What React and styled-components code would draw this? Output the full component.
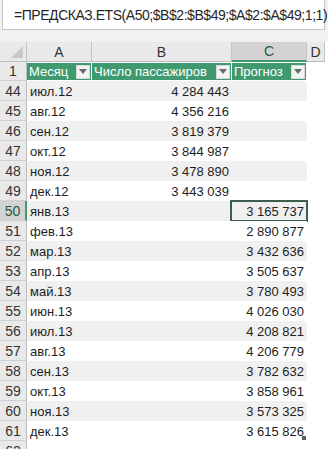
import React from 'react'
import styled, { createGlobalStyle } from 'styled-components'

const GlobalStyle = createGlobalStyle`
  html, body {
    margin: 0;
    padding: 0;
    background: #ffffff;
    font-family: 'Liberation Sans', Arial, sans-serif;
  }
`

const COLS = '27px 65px 140px 75px 18px 1fr'
const GREEN = '#3f9a6f'

const rows = [
  ['июл.12', '4 284 443', ''],
  ['авг.12', '4 356 216', ''],
  ['сен.12', '3 819 379', ''],
  ['окт.12', '3 844 987', ''],
  ['ноя.12', '3 478 890', ''],
  ['дек.12', '3 443 039', ''],
  ['янв.13', '', '3 165 737'],
  ['фев.13', '', '2 890 877'],
  ['мар.13', '', '3 432 636'],
  ['апр.13', '', '3 505 637'],
  ['май.13', '', '3 780 493'],
  ['июн.13', '', '4 026 030'],
  ['июл.13', '', '4 208 821'],
  ['авг.13', '', '4 206 779'],
  ['сен.13', '', '3 782 632'],
  ['окт.13', '', '3 858 961'],
  ['ноя.13', '', '3 573 325'],
  ['дек.13', '', '3 615 826'],
]

const Sheet = styled.div`
  width: 328px;
  height: 449px;
  overflow: hidden;
  background: #ffffff;
  color: #222;
`

const FormulaArea = styled.div`
  height: 42px;
  background: #f1f1f1;
  padding: 0 3px 0 2px;
  box-sizing: border-box;
`

const FormulaBox = styled.div`
  height: 30px;
  background: #ffffff;
  border: 1px solid #c6c6c6;
  border-top: none;
  box-sizing: border-box;
  display: flex;
  align-items: center;
  padding-left: 11px;
  font-size: 14px;
  letter-spacing: -0.45px;
  color: #262626;
  white-space: nowrap;
`

const Row = styled.div`
  display: grid;
  grid-template-columns: ${COLS};
  height: ${(p) => p.$h || 20}px;
`

const ColHead = styled.div`
  background: ${(p) => (p.$active ? '#d3d3d3' : '#e9e9e9')};
  border-right: 1px solid #c4c4c4;
  border-bottom: ${(p) => (p.$active ? `2px solid ${GREEN}` : '1px solid #bdbdbd')};
  box-sizing: border-box;
  display: flex;
  align-items: center;
  justify-content: center;
  font-size: 14px;
  color: ${(p) => (p.$active ? '#1f5c40' : '#333')};
  position: relative;
`

const Corner = styled(ColHead)`
  &::after {
    content: '';
    position: absolute;
    right: 3px;
    bottom: 3px;
    border-style: solid;
    border-width: 0 0 12px 12px;
    border-color: transparent transparent #c8c8c8 transparent;
  }
`

const RowHead = styled.div`
  background: ${(p) => (p.$active ? '#d3d3d3' : '#e9e9e9')};
  border-right: ${(p) => (p.$active ? `2px solid ${GREEN}` : '1px solid #bdbdbd')};
  border-bottom: 1px solid #d0d0d0;
  box-sizing: border-box;
  display: flex;
  align-items: center;
  justify-content: center;
  font-size: 14px;
  color: ${(p) => (p.$active ? '#1f5c40' : '#333')};
`

const HeadCell = styled.div`
  background: ${GREEN};
  border: 1px solid #ffffff;
  border-left: none;
  box-sizing: border-box;
  display: flex;
  align-items: center;
  justify-content: space-between;
  padding: 0 1px 0 2px;
  font-size: 13px;
  color: #ffffff;
  white-space: nowrap;
  overflow: hidden;
`

const FilterButton = styled.span`
  width: 14px;
  height: 14px;
  flex: none;
  background: #f3f3f3;
  border: 1px solid #d8d8d8;
  box-sizing: border-box;
  display: flex;
  align-items: center;
  justify-content: center;

  &::after {
    content: '';
    border-style: solid;
    border-width: 5px 4px 0 4px;
    border-color: #6a6a6a transparent transparent transparent;
  }
`

const Cell = styled.div`
  background: ${(p) => (p.$band ? '#f0f0f0' : '#ffffff')};
  box-sizing: border-box;
  display: flex;
  align-items: center;
  justify-content: ${(p) => (p.$num ? 'flex-end' : 'flex-start')};
  padding: ${(p) => (p.$num ? '0 3px 0 0' : '0 0 0 3px')};
  font-size: 13px;
  color: #1e1e1e;
  white-space: nowrap;
  position: relative;
`

const Selection = styled.div`
  position: absolute;
  inset: -1px -1px -1px -2px;
  border: 2px solid #3d5d4f;
  pointer-events: none;
`

const ResizeHandle = styled.span`
  position: absolute;
  right: 1px;
  bottom: 1px;
  width: 4px;
  height: 4px;
  background: #606060;
`

const Blank = styled.div`
  background: #ffffff;
`

export default function App() {
  return (
    <Sheet>
      <GlobalStyle />
      <FormulaArea>
        <FormulaBox>=ПРЕДСКАЗ.ETS(A50;$B$2:$B$49;$A$2:$A$49;1;1)</FormulaBox>
      </FormulaArea>

      <Row>
        <Corner />
        <ColHead>A</ColHead>
        <ColHead>B</ColHead>
        <ColHead $active>C</ColHead>
        <ColHead>D</ColHead>
        <Blank />
      </Row>

      <Row $h={19}>
        <RowHead>1</RowHead>
        <HeadCell>
          Месяц
          <FilterButton />
        </HeadCell>
        <HeadCell>
          Число пассажиров
          <FilterButton />
        </HeadCell>
        <HeadCell>
          Прогноз
          <FilterButton />
        </HeadCell>
        <Blank />
        <Blank />
      </Row>

      {rows.map(([month, pax, forecast], i) => {
        const n = 44 + i
        const band = i % 2 === 0
        const last = i === rows.length - 1
        return (
          <Row key={n}>
            <RowHead $active={n === 50}>{n}</RowHead>
            <Cell $band={band}>{month}</Cell>
            <Cell $band={band} $num>
              {pax}
            </Cell>
            <Cell $band={band} $num>
              {forecast}
              {n === 50 && <Selection />}
              {last && <ResizeHandle />}
            </Cell>
            <Blank />
            <Blank />
          </Row>
        )
      })}

      <Row>
        <RowHead>62</RowHead>
        <Blank />
        <Blank />
        <Blank />
        <Blank />
        <Blank />
      </Row>
    </Sheet>
  )
}
